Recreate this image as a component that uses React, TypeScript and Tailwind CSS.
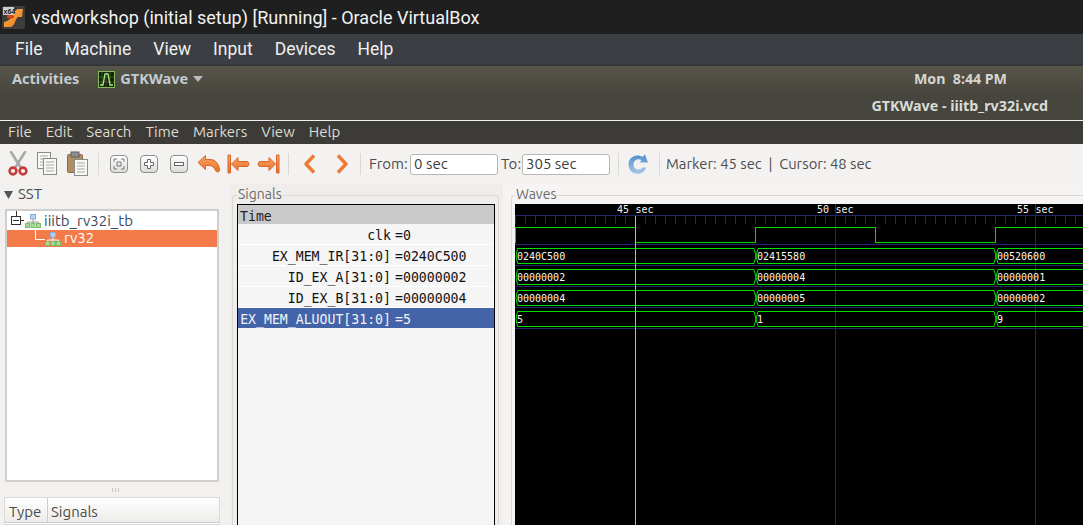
import React from "react";

const ui = "font-['Ubuntu','Noto_Sans','Open_Sans',sans-serif]";

function VBoxLogo() {
  return (
    <svg width="23" height="23" viewBox="0 0 23 23" className="shrink-0">
      <defs>
        <linearGradient id="vbo" x1="0" y1="0" x2="1" y2="1">
          <stop offset="0" stopColor="#ffb84a" />
          <stop offset="1" stopColor="#e8761a" />
        </linearGradient>
      </defs>
      <rect x="0" y="0" width="23" height="23" rx="2" fill="#3d3d3d" />
      <path d="M2 21 L9 21 C13 20 13 13 16 11 L20 11 L21 3 L17 3 C12 3 11 10 8 13 C6 15 3 16 2 16 Z" fill="url(#vbo)" />
      <ellipse cx="8.5" cy="10.5" rx="3.6" ry="2" fill="#d8431c" />
      <rect x="1" y="1" width="11" height="8" fill="#cfcfcf" />
      <text x="1.5" y="7.5" fontSize="7" fontWeight="700" fontFamily="Liberation Sans" fill="#222">x64</text>
    </svg>
  );
}

function WaveIcon() {
  return (
    <svg width="17" height="17" viewBox="0 0 17 17" className="shrink-0">
      <rect x="0.5" y="0.5" width="16" height="16" fill="#16200f" stroke="#86bd58" />
      <path d="M4 1V16M8 1V16M12 1V16M1 6H16M1 11H16" stroke="#4a6e33" strokeWidth="0.7" />
      <path d="M2 14H5L7 3H10L12 14H15" fill="none" stroke="#a5ea83" strokeWidth="1.3" />
    </svg>
  );
}

function Scissors() {
  return (
    <svg width="20" height="26" viewBox="0 0 20 26">
      <path d="M3 1 L13 17 M17 1 L7 17" stroke="#a9a9a6" strokeWidth="2.6" strokeLinecap="round" />
      <circle cx="5" cy="20" r="3.4" fill="none" stroke="#c43d3d" strokeWidth="2.6" />
      <circle cx="15" cy="20" r="3.4" fill="none" stroke="#c43d3d" strokeWidth="2.6" />
    </svg>
  );
}

function Sheet({ x, y }: { x: number; y: number }) {
  return (
    <g transform={`translate(${x} ${y})`}>
      <rect x="0.5" y="0.5" width="13" height="16" fill="#f8f8f6" stroke="#8b8b88" />
      <path d="M3 4H11M3 7H11M3 10H11M3 13H11" stroke="#a8a8a5" />
    </g>
  );
}

function CopyIcon() {
  return (
    <svg width="21" height="24" viewBox="0 0 21 24">
      <Sheet x={0} y={0} />
      <Sheet x={6} y={6} />
    </svg>
  );
}

function PasteIcon() {
  return (
    <svg width="21" height="26" viewBox="0 0 21 26">
      <rect x="0.5" y="3.5" width="15" height="18" rx="1" fill="#b08d62" stroke="#8a6b44" />
      <rect x="4" y="1" width="8" height="5" fill="#8e8e8c" stroke="#5f5f5d" />
      <Sheet x={7} y={8} />
    </svg>
  );
}

function KeyBox({ children }: { children: React.ReactNode }) {
  return (
    <svg width="18" height="18" viewBox="0 0 18 18">
      <defs>
        <linearGradient id="keyg" x1="0" y1="0" x2="0" y2="1">
          <stop offset="0" stopColor="#ffffff" />
          <stop offset="1" stopColor="#dcdbd8" />
        </linearGradient>
      </defs>
      <rect x="0.5" y="0.5" width="17" height="17" rx="3.5" fill="url(#keyg)" stroke="#8f8f8c" />
      {children}
    </svg>
  );
}

function Arrow({ d }: { d: string }) {
  return (
    <svg width="23" height="20" viewBox="0 0 23 20">
      <defs>
        <linearGradient id="arrg" x1="0" y1="0" x2="0" y2="1">
          <stop offset="0" stopColor="#f9a566" />
          <stop offset="1" stopColor="#ea6f26" />
        </linearGradient>
      </defs>
      <path d={d} fill="url(#arrg)" stroke="#d9662a" strokeWidth="1" strokeLinejoin="round" />
    </svg>
  );
}

function Chevron({ flip }: { flip?: boolean }) {
  return (
    <svg width="12" height="20" viewBox="0 0 12 20">
      <path
        d={flip ? "M2 1.5 L10 10 L2 18.5" : "M10 1.5 L2 10 L10 18.5"}
        fill="none"
        stroke="#ee7a32"
        strokeWidth="3.4"
        strokeLinejoin="round"
      />
    </svg>
  );
}

function Refresh() {
  return (
    <svg width="21" height="21" viewBox="0 0 21 21">
      <defs>
        <linearGradient id="refg" x1="0" y1="0" x2="0" y2="1">
          <stop offset="0" stopColor="#4f8dcc" />
          <stop offset="1" stopColor="#a9c9e8" />
        </linearGradient>
      </defs>
      <path
        d="M18 13.5 C16.5 17.8 13 20 10 20 C4.5 20 0.5 16 0.5 10.5 C0.5 5 4.5 1.5 9.5 1.5 C11.5 1.5 13 2 14.5 3 L17 0.5 L20 8.5 L11.5 8.5 L13.5 6.2 C12.5 5.5 11.5 5.2 10.5 5.2 C7.5 5.2 5.5 7.5 5.5 10.5 C5.5 13.5 7.5 15.5 10.5 15.5 C12.5 15.5 14 14.5 15 13.5 Z"
        fill="url(#refg)"
      />
    </svg>
  );
}

function Sep({ className }: { className: string }) {
  return <div className={`w-px h-[22px] bg-[#d9d8d5] shrink-0 ${className}`} />;
}

function TreeIcon({ line }: { line: string }) {
  return (
    <svg width="16" height="14" viewBox="0 0 16 14" className="shrink-0">
      <path d="M8 5V8M2.5 10V8H13.5V10M8 8V10" stroke={line} fill="none" />
      <rect x="5.5" y="0.5" width="5" height="4.5" fill="#b5d3f0" stroke="#86aed6" />
      <rect x="0.5" y="9.5" width="4" height="4" fill="#a5dc96" stroke="#7cbc6c" />
      <rect x="6" y="9.5" width="4" height="4" fill="#a5dc96" stroke="#7cbc6c" />
      <rect x="11.5" y="9.5" width="4" height="4" fill="#a5dc96" stroke="#7cbc6c" />
    </svg>
  );
}

function Waves() {
  const W = 568;
  const H = 321;
  const ox = 515;
  const oy = 204;
  const ticks: number[] = [];
  for (let x = 515; x < 1083; x += 10) ticks.push(x - ox);
  const rowSep = [244, 265, 286, 307, 328].map((y) => y - oy);
  const rows = [
    { top: 248, vals: ["0240C500", "02415580", "00520600"] },
    { top: 269, vals: ["00000002", "00000004", "00000001"] },
    { top: 290, vals: ["00000004", "00000005", "00000002"] },
    { top: 311, vals: ["5", "1", "9"] },
  ];
  const green = "#00e000";
  const clk = "M0.5 39V23.5H120.5M120.5 38.5H240.5V23.5H360.5V38.5H480.5V23.5H568";
  return (
    <svg width={W} height={H} viewBox={`0 0 ${W} ${H}`} className="block bg-black" shapeRendering="crispEdges">
      <path d={`M0 11.5H${W}`} stroke="#25256e" />
      {ticks.map((x) => (
        <path key={x} d={`M${x + 0.5} 11V20`} stroke="#25256e" />
      ))}
      {[320, 520].map((x) => (
        <path key={x} d={`M${x + 0.5} 0V${H}`} stroke="#25256e" />
      ))}
      {rowSep.map((y) => (
        <path key={y} d={`M0 ${y + 0.5}H${W}`} stroke="#25256e" />
      ))}
      <path d={clk} fill="none" stroke={green} />
      {rows.map((r) => {
        const t = r.top - oy + 0.5;
        const b = t + 15;
        const m = t + 7.5;
        const segs = `M1 ${m}L2.5 ${t}H239L241 ${m}L239 ${b}H2.5Z M241 ${m}L243 ${t}H479L481 ${m}L479 ${b}H243Z M481 ${m}L483 ${t}H568M481 ${m}L483 ${b}H568`;
        return (
          <g key={r.top}>
            <path d={segs} fill="none" stroke={green} shapeRendering="auto" />
            {r.vals.map((v, i) => (
              <text
                key={v + i}
                x={[2, 242, 482][i]}
                y={r.top - oy + 11.5}
                fontFamily="DejaVu Sans Mono"
                fontSize="10"
                fill="#fff8e6"
                shapeRendering="auto"
              >
                {v}
              </text>
            ))}
          </g>
        );
      })}
      <path d={`M120.5 12V${H}`} stroke="#f0a0a0" />
      {[
        ["45", 102, 120.5],
        ["50", 302, 320.5],
        ["55", 502, 520.5],
      ].map(([a, x1, x2]) => (
        <g key={a as string} fontFamily="DejaVu Sans Mono" fontSize="10" fill="#f0f0f0">
          <text x={x1 as number} y={9}>{a}</text>
          <text x={x2 as number} y={9}>sec</text>
        </g>
      ))}
    </svg>
  );
}

const signalRows = [
  { n: "clk", v: "=0" },
  { n: "EX_MEM_IR[31:0]", v: "=0240C500" },
  { n: "ID_EX_A[31:0]", v: "=00000002" },
  { n: "ID_EX_B[31:0]", v: "=00000004" },
];

export default function App() {
  return (
    <div className="w-[1083px] h-[525px] overflow-hidden flex flex-col bg-[#f2f1f0]">
      {/* VirtualBox title */}
      <div className="h-[34px] bg-[#1f1f1f] flex items-center pl-[2px] shrink-0">
        <VBoxLogo />
        <span className="ml-[7px] text-[#f2f2f2] text-[18px] font-['Roboto',sans-serif] whitespace-nowrap">
          vsdworkshop (initial setup) [Running] - Oracle VirtualBox
        </span>
      </div>
      {/* VirtualBox menu */}
      <div className="h-[32px] bg-[#3b3e42] border-b-2 border-[#33363a] flex items-center pl-[15px] gap-[22px] text-[#f0f0f0] text-[17.5px] font-['Roboto',sans-serif] shrink-0">
        {["File", "Machine", "View", "Input", "Devices", "Help"].map((m) => (
          <span key={m}>{m}</span>
        ))}
      </div>
      {/* Ubuntu panel */}
      <div className="h-[26px] bg-gradient-to-b from-[#585549] to-[#48463e] flex items-center pl-[12px] text-[14.5px] font-bold text-[#c2ccd2] font-['Noto_Sans',sans-serif] shrink-0">
        <span>Activities</span>
        <span className="ml-[19px]"><WaveIcon /></span>
        <span className="ml-[5px]">GTKWave</span>
        <svg width="10" height="6" viewBox="0 0 10 6" className="ml-[5px]"><path d="M0 0H10L5 6Z" fill="#b8bcbc" /></svg>
        <span className="ml-auto mr-[76px] text-[14.2px] text-[#d6d6d0]">Mon&nbsp; 8:44 PM</span>
      </div>
      {/* Window title */}
      <div className="h-[28px] bg-[#46453e] flex items-center justify-end pr-[35px] pb-[1px] text-[14.3px] font-bold text-[#dcdcd6] font-['Noto_Sans',sans-serif] shrink-0">
        GTKWave - iiitb_rv32i.vcd
      </div>
      <div className="h-[1px] bg-[#f0f0f0] shrink-0" />
      {/* GTK menu */}
      <div className={`h-[23px] bg-[#3c3b37] flex items-center pl-[8px] gap-[14px] text-[#dfdbd2] text-[15px] shrink-0 ${ui}`}>
        {["File", "Edit", "Search", "Time", "Markers", "View", "Help"].map((m) => (
          <span key={m}>{m}</span>
        ))}
      </div>
      {/* Toolbar */}
      <div className={`h-[40px] bg-[#f3f2f1] flex items-center shrink-0 text-[15px] text-[#4c4c4c] ${ui}`}>
        <span className="ml-[8px] flex"><Scissors /></span>
        <span className="ml-[9px] flex"><CopyIcon /></span>
        <span className="ml-[9px] flex"><PasteIcon /></span>
        <Sep className="ml-[10px]" />
        <span className="ml-[11px] flex">
          <KeyBox>
            <path d="M4 7V4H7M11 4H14V7M14 11V14H11M7 14H4V11M7 7H11V11H7Z" fill="none" stroke="#777" />
          </KeyBox>
        </span>
        <span className="ml-[12px] flex">
          <KeyBox>
            <path d="M7.5 4.5H10.5V7.5H13.5V10.5H10.5V13.5H7.5V10.5H4.5V7.5H7.5Z" fill="#fff" stroke="#666" />
          </KeyBox>
        </span>
        <span className="ml-[12px] flex">
          <KeyBox>
            <rect x="4.5" y="7.5" width="9" height="3" fill="#fff" stroke="#666" />
          </KeyBox>
        </span>
        <span className="ml-[9px] flex">
          <Arrow d="M1 8.5 L8.5 1.5 V5.5 H13 C19 5.5 22 10.5 22.5 16 C22.5 18.5 19.5 18.5 18.5 16.5 C17 13 15 11.5 12 11.5 H8.5 V15.5 Z" />
        </span>
        <span className="ml-[7px] flex">
          <Arrow d="M1 1 H3.5 V19 H1 Z M4.5 10 L11 3.5 V7.5 H20 C22.5 7.5 22.5 12.5 20 12.5 H11 V16.5 Z" />
        </span>
        <span className="ml-[7px] flex">
          <Arrow d="M22 1 H19.5 V19 H22 Z M18.5 10 L12 3.5 V7.5 H3 C0.5 7.5 0.5 12.5 3 12.5 H12 V16.5 Z" />
        </span>
        <Sep className="ml-[8px]" />
        <span className="ml-[15px] flex"><Chevron /></span>
        <span className="ml-[20px] flex"><Chevron flip /></span>
        <Sep className="ml-[12px]" />
        <span className="ml-[8px] w-[41px] whitespace-nowrap">From:</span>
        <div className="w-[88px] h-[21px] bg-white border border-[#b9b7b3] rounded-[3px] flex items-center pl-[3px] text-[#3c3c3c]">0 sec</div>
        <span className="ml-[3px] w-[21px]">To:</span>
        <div className="w-[88px] h-[21px] bg-white border border-[#b9b7b3] rounded-[3px] flex items-center pl-[3px] text-[#3c3c3c]">305 sec</div>
        <Sep className="ml-[8px]" />
        <span className="ml-[9px] flex"><Refresh /></span>
        <Sep className="ml-[10px]" />
        <span className="ml-[6px] text-[14.8px] whitespace-pre">Marker: 45 sec  |  Cursor: 48 sec</span>
      </div>
      {/* Panes */}
      <div className={`flex-1 flex min-h-0 ${ui}`}>
        {/* SST */}
        <div className="w-[230px] shrink-0 flex flex-col bg-[#f2f1f0] text-[15px] text-[#4c4c4c]">
          <div className="h-[25px] flex items-center pl-[4px] pb-[4px] shrink-0">
            <svg width="9" height="8" viewBox="0 0 9 8"><path d="M0 0H9L4.5 8Z" fill="#555" /></svg>
            <span className="ml-[5px]">SST</span>
          </div>
          <div className="ml-[5px] w-[214px] h-[273px] shrink-0 bg-white border-2 border-[#cfcecb]">
            <div className="h-[19px] flex items-center relative text-[#3c4a5a]">
              <svg width="15" height="19" viewBox="0 0 15 19" className="ml-[3px] shrink-0" shapeRendering="crispEdges">
                <path d="M6.5 0V5M1.5 5.5H10.5V13.5H1.5ZM3 9.5H9M10.5 9.5H14" fill="none" stroke="#333" />
              </svg>
              <TreeIcon line="#9a9a9a" />
              <span className="ml-[3px] pt-[2px]">iiitb_rv32i_tb</span>
            </div>
            <div className="h-[17px] bg-[#f37b4a] flex items-center text-white">
              <svg width="10" height="17" viewBox="0 0 10 17" className="ml-[28px] shrink-0" shapeRendering="crispEdges">
                <path d="M0.5 0V9.5H10" fill="none" stroke="#fff" />
              </svg>
              <TreeIcon line="#ffffff" />
              <span className="ml-[3px]">rv32</span>
            </div>
          </div>
          <div className="h-[15px] shrink-0 flex items-center justify-center gap-[1px]">
            <span className="w-px h-[4px] bg-[#c6c5c2]" />
            <span className="w-[1px] h-[4px] ml-[1px] bg-[#c6c5c2]" />
            <span className="w-[1px] h-[4px] ml-[1px] bg-[#c6c5c2]" />
          </div>
          <div className="ml-[4px] w-[216px] flex-1 border border-[#dbdad7] bg-white">
            <div className="h-[25px] bg-gradient-to-b from-white to-[#edecea] border-b border-[#cfcecb] flex items-center">
              <span className="w-[43px] pl-[4px] pt-[4px] border-r border-[#cfcecb] h-full flex items-center">Type</span>
              <span className="pl-[3px] pt-[4px] h-full flex items-center">Signals</span>
            </div>
          </div>
        </div>
        {/* Signals */}
        <div className="w-[273px] shrink-0 bg-[#efeeec] pt-[11px] pl-[2px] relative">
          <div className="w-[267px] h-full border border-[#d9d8d5] rounded-t-[4px] pl-[4px] pt-[8px] border-b-0">
            <span className="absolute left-[7px] top-[2px] px-px bg-[#efeeec] text-[14px] leading-[16px] text-[#6b6b6b]">Signals</span>
            <div className="w-[258px] h-full border border-black border-b-0 bg-[#f5f5f5] font-['DejaVu_Sans_Mono',monospace] text-[13.2px] leading-[17px]">
              <div className="h-[19px] bg-[#c9c9c9] pl-[2px] pt-[3px] flex items-center text-[#222]">Time</div>
              {signalRows.map((r) => (
                <div key={r.n} className="h-[21px] border-b border-[#ffffff] pt-[3px] flex items-center text-[#111]">
                  <span className="w-[153px] text-right whitespace-nowrap">{r.n}</span>
                  <span className="ml-[4px]">{r.v}</span>
                </div>
              ))}
              <div className="h-[20px] bg-[#4464a9] pt-[3px] flex items-center text-[#f2f2f2]">
                <span className="w-[153px] text-right whitespace-nowrap">EX_MEM_ALUOUT[31:0]</span>
                <span className="ml-[4px]">=5</span>
              </div>
            </div>
          </div>
        </div>
        {/* Waves */}
        <div className="flex-1 min-w-0 bg-[#f5f4f3] pt-[11px] pl-[8px] relative overflow-hidden">
          <div className="h-full border border-[#d9d8d5] rounded-tl-[4px] pl-[3px] pt-[8px] border-b-0 border-r-0">
            <span className="absolute left-[12px] top-[2px] px-px bg-[#f5f4f3] text-[14px] leading-[16px] text-[#6b6b6b]">Waves</span>
            <Waves />
          </div>
        </div>
      </div>
    </div>
  );
}
